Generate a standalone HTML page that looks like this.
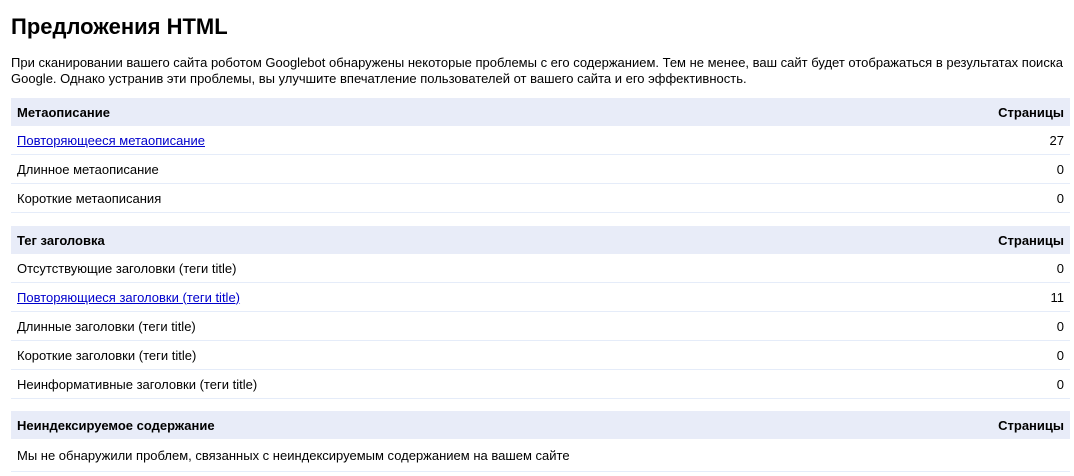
<!DOCTYPE html>
<html><head><meta charset="utf-8"><style>
body{margin:0;background:#fff;font-family:"Liberation Sans",Arial,sans-serif;font-size:13px;color:#000;width:1074px;height:476px;overflow:hidden;position:relative}
h1{position:absolute;left:11px;top:12px;margin:0;font-size:22px;font-weight:bold;line-height:30px}
p{position:absolute;left:11px;top:55px;margin:0;width:1055px;line-height:16px}
table{position:absolute;left:11px;width:1059px;border-collapse:collapse}
td,th{height:28px;padding:0 6px;border-bottom:1px solid #e5ecf9;text-align:left;vertical-align:middle}
th{background:#e8ecf8;font-weight:bold;border-bottom:none}
td.r,th.r{text-align:right}
a{color:#00c;text-decoration:underline}
</style></head><body>
<h1>Предложения HTML</h1>
<p>При сканировании вашего сайта роботом Googlebot обнаружены некоторые проблемы с его содержанием. Тем не менее, ваш сайт будет отображаться в результатах поиска Google. Однако устранив эти проблемы, вы улучшите впечатление пользователей от вашего сайта и его эффективность.</p>
<table style="top:98px">
<tr><th>Метаописание</th><th class="r">Страницы</th></tr>
<tr><td><a>Повторяющееся метаописание</a></td><td class="r">27</td></tr>
<tr><td>Длинное метаописание</td><td class="r">0</td></tr>
<tr><td>Короткие метаописания</td><td class="r">0</td></tr>
</table>
<table style="top:226px">
<tr><th>Тег заголовка</th><th class="r">Страницы</th></tr>
<tr><td>Отсутствующие заголовки (теги title)</td><td class="r">0</td></tr>
<tr><td><a>Повторяющиеся заголовки (теги title)</a></td><td class="r">11</td></tr>
<tr><td>Длинные заголовки (теги title)</td><td class="r">0</td></tr>
<tr><td>Короткие заголовки (теги title)</td><td class="r">0</td></tr>
<tr><td>Неинформативные заголовки (теги title)</td><td class="r">0</td></tr>
</table>
<table style="top:411px">
<tr><th>Неиндексируемое содержание</th><th class="r">Страницы</th></tr>
<tr><td colspan="2" style="height:32px">Мы не обнаружили проблем, связанных с неиндексируемым содержанием на вашем сайте</td></tr>
</table>
</body></html>
